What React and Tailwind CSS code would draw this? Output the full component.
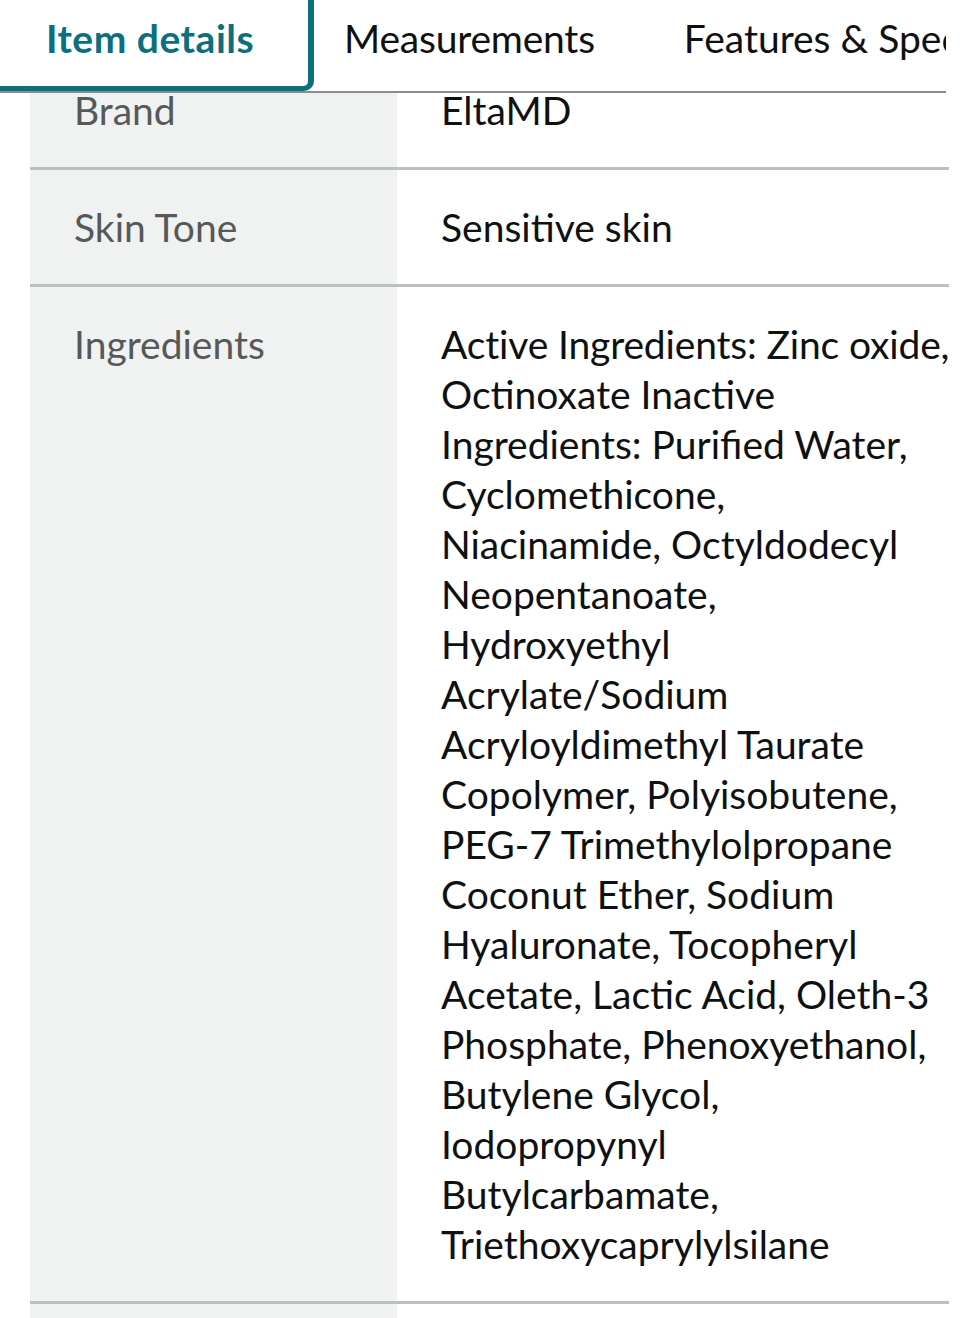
import React from "react";

const ingredientLines = [
  "Active Ingredients: Zinc oxide,",
  "Octinoxate Inactive",
  "Ingredients: Purified Water,",
  "Cyclomethicone,",
  "Niacinamide, Octyldodecyl",
  "Neopentanoate,",
  "Hydroxyethyl",
  "Acrylate/Sodium",
  "Acryloyldimethyl Taurate",
  "Copolymer, Polyisobutene,",
  "PEG-7 Trimethylolpropane",
  "Coconut Ether, Sodium",
  "Hyaluronate, Tocopheryl",
  "Acetate, Lactic Acid, Oleth-3",
  "Phosphate, Phenoxyethanol,",
  "Butylene Glycol,",
  "Iodopropynyl",
  "Butylcarbamate,",
  "Triethoxycaprylylsilane",
];

const rows = [
  { label: "Brand", lines: ["EltaMD"] },
  { label: "Skin Tone", lines: ["Sensitive skin"] },
  { label: "Ingredients", lines: ingredientLines },
];

export default function App() {
  return (
    <div
      className="w-[980px] h-[1318px] bg-white overflow-hidden"
      style={{ fontFamily: "Lato, 'Open Sans', sans-serif" }}
    >
      <div className="relative z-10 bg-white w-[946px] h-[93px] flex border-b-2 border-[#8a8e8e] overflow-hidden">
        <div className="relative w-[314px] h-full shrink-0">
          <div className="absolute left-0 top-0 w-[314px] h-[91px] border-r-[6px] border-b-[5px] border-[#0c6f80] rounded-br-[10px]"></div>
          <div className="pl-[46px] pt-[13px] text-[39px] leading-[50px] font-bold tracking-[0.5px] text-[#0c6f80] whitespace-nowrap">
            Item details
          </div>
        </div>
        <div className="pl-[30px] pt-[13px] text-[39px] leading-[50px] tracking-[-0.2px] text-[#0f1111] whitespace-nowrap shrink-0">
          Measurements
        </div>
        <div className="pl-[89px] pt-[13px] text-[39px] leading-[50px] text-[#0f1111] whitespace-nowrap shrink-0">
          Features &amp; Specs
        </div>
      </div>
      <div className="h-[1225px] overflow-hidden">
        <div className="-mt-[40px] ml-[30px] w-[919px]">
          {rows.map((r, i) => (
            <div key={i} className="flex border-b-[3px] border-[#bbbfbf]">
              <div className="w-[367px] shrink-0 bg-[#f0f2f2] pl-[44px] pr-4 py-[32px] text-[39px] leading-[50px] text-[#565959]">
                {r.label}
              </div>
              <div className="flex-1 min-w-0 pl-[44px] py-[32px] text-[39px] leading-[50px] text-[#0f1111] whitespace-nowrap">
                {r.lines.map((l, j) => (
                  <div key={j} className={j === 0 && r.lines.length > 1 ? "tracking-[-0.15px]" : ""}>
                    {l}
                  </div>
                ))}
              </div>
            </div>
          ))}
          <div className="flex h-[40px]">
            <div className="w-[367px] bg-[#f0f2f2]"></div>
          </div>
        </div>
      </div>
    </div>
  );
}
